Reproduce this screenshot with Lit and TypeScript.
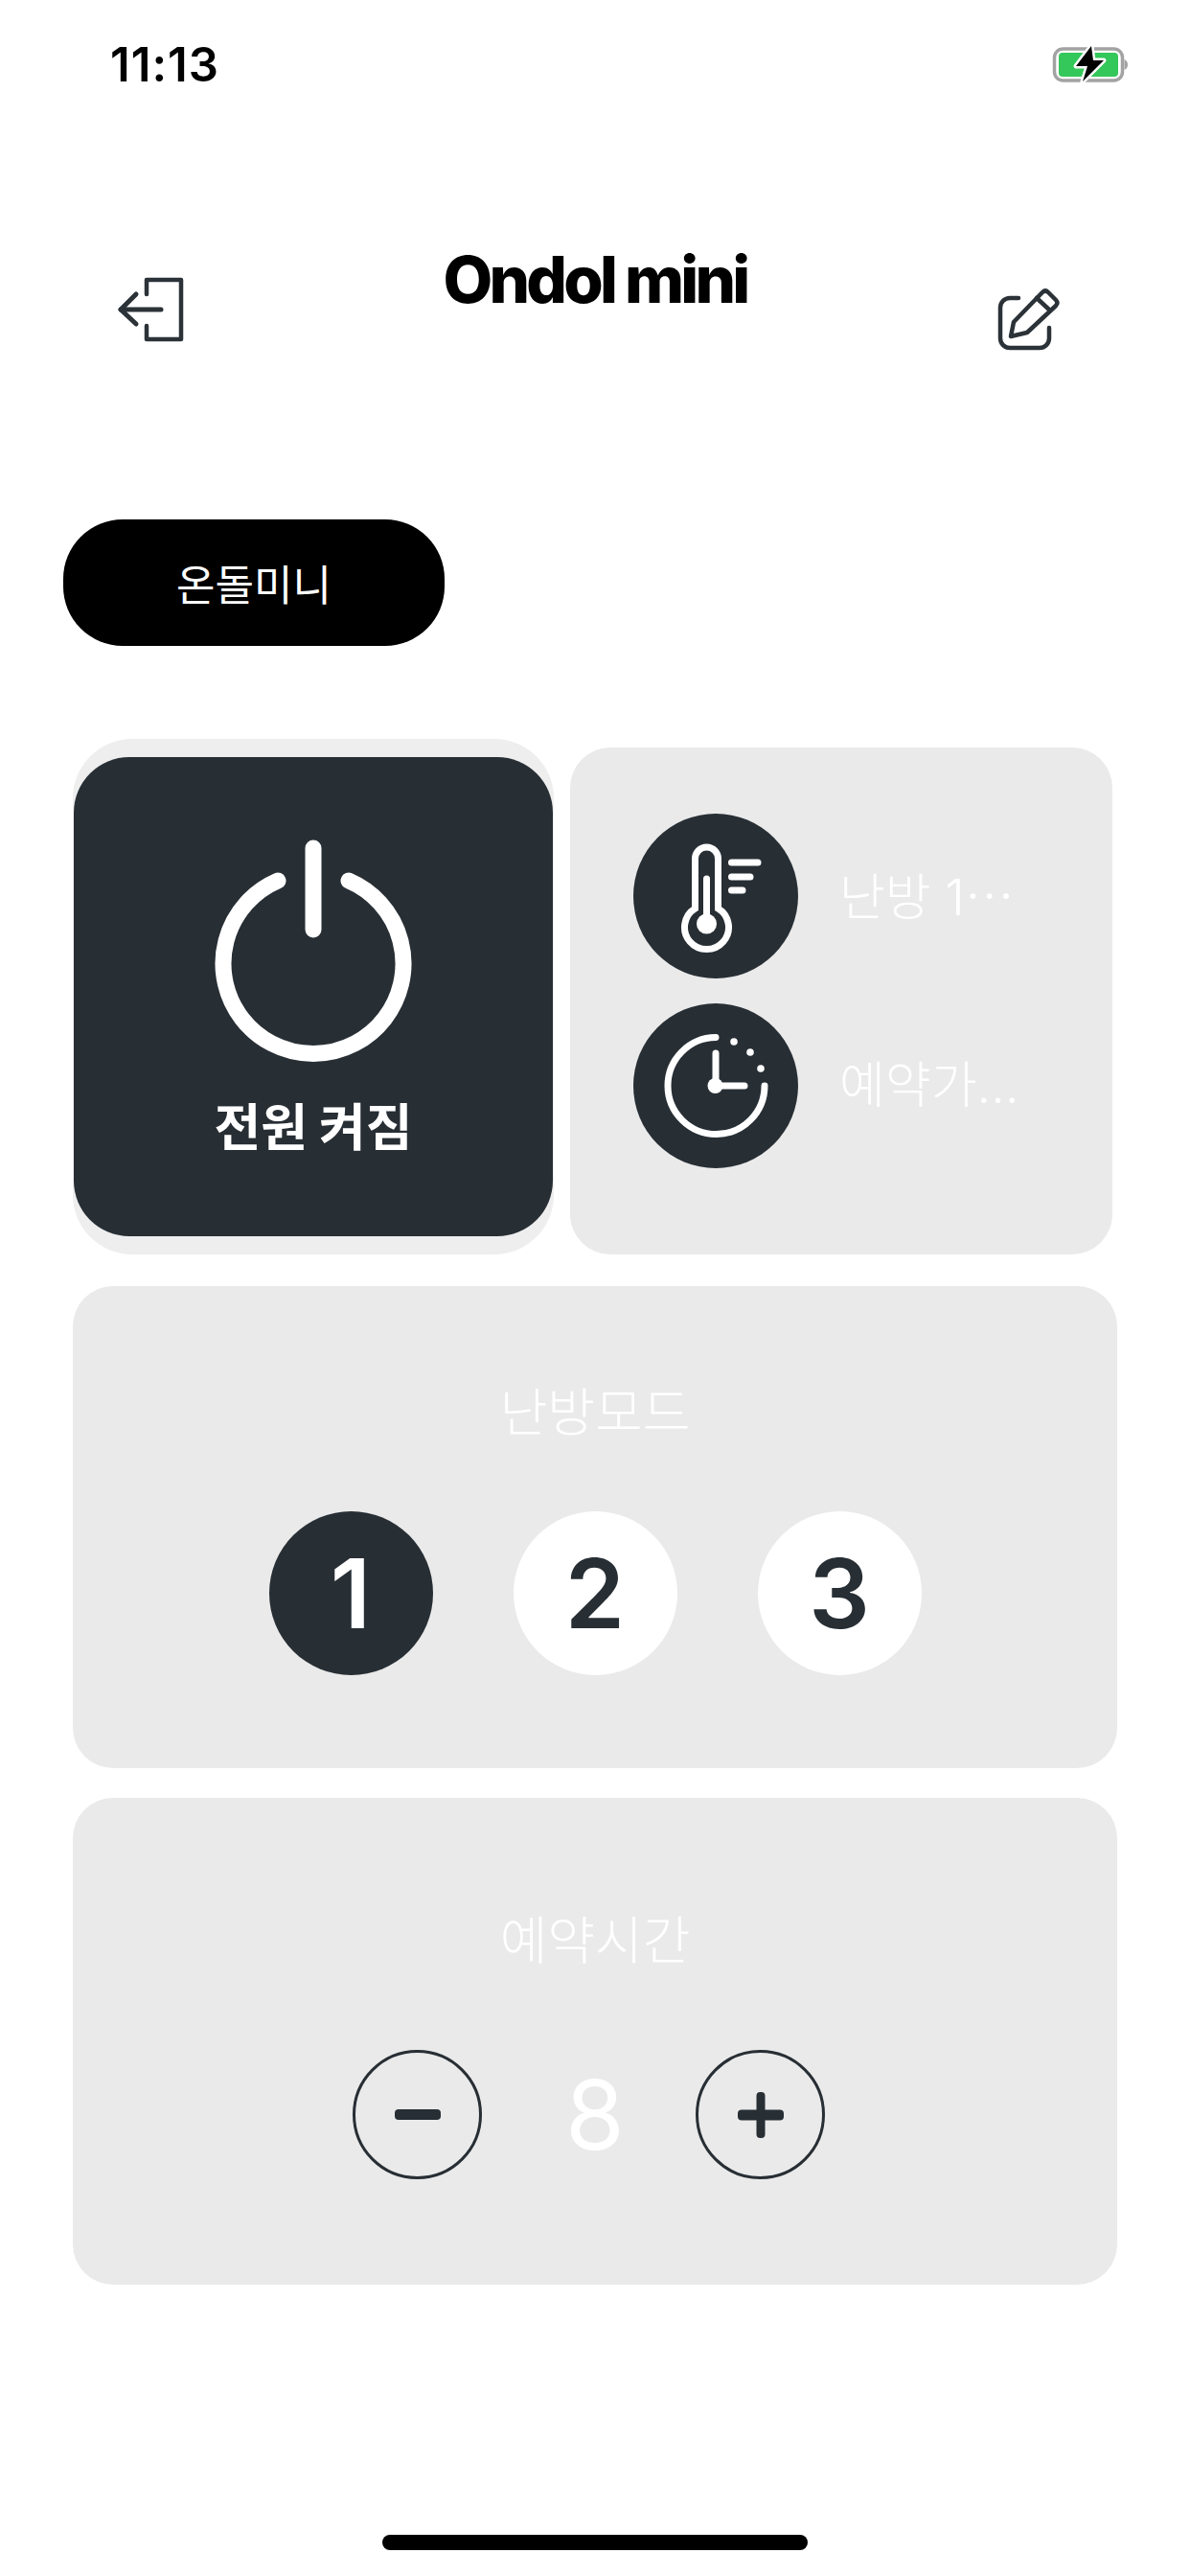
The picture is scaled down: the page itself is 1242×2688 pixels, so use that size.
import { LitElement, html, css } from "lit";
import { customElement } from "lit/decorators.js";

@customElement("app-root")
export class AppRoot extends LitElement {
  static styles = css`
    :host { display: block; width: 1242px; height: 2688px; background: #fff; position: relative; overflow: hidden; font-family: "Noto Sans CJK KR", "Noto Sans", sans-serif; }
    svg { display: block; overflow: visible; }
    .status { display: flex; justify-content: space-between; align-items: center; height: 134px; padding: 0 63px 0 115px; box-sizing: border-box; }
    .time { font: 600 49px/1 Inter, sans-serif; color: #000; letter-spacing: 1px; }
    .header { position: relative; display: flex; justify-content: space-between; align-items: flex-start; padding: 154px 134px 0 123px; box-sizing: border-box; height: 408px; }
    .logo { position: absolute; left: 0; right: 0; top: 118px; text-align: center; font: 800 67px/80px Inter, sans-serif; color: #000; letter-spacing: -3.8px; }
    .right { margin-top: 12px; }
    .pill { margin-left: 66px; width: 398px; height: 132px; border-radius: 62px; background: #000; color: #fff; display: flex; align-items: center; justify-content: center; font-size: 44px; }
    .top { display: flex; margin: 97px 0 0 76px; gap: 17px; align-items: flex-start; }
    .power-wrap { width: 502px; height: 538px; border-radius: 62px; background: #eee; display: flex; align-items: center; justify-content: center; }
    .power { width: 500px; height: 500px; border-radius: 58px; background: #272e34; color: #fff; display: flex; flex-direction: column; align-items: center; box-sizing: border-box; padding-top: 86px; }
    .power-label { font-size: 53px; font-weight: 700; line-height: 60px; margin-top: 37px; }
    .info { width: 566px; height: 529px; margin-top: 9px; background: #eaeaea; border-radius: 42px; display: flex; flex-direction: column; gap: 26px; padding: 69px 0 0 66px; box-sizing: border-box; }
    .info-row { display: flex; align-items: center; gap: 43px; color: #fff; font: 300 52px/60px Inter, "Noto Sans CJK KR", sans-serif; }
    .cjk { font-family: "Noto Sans CJK KR", sans-serif; }
    .dark { width: 172px; height: 172px; border-radius: 50%; background: #272e34; display: flex; align-items: center; justify-content: center; flex: none; }
    .card { width: 1090px; background: #eaeaea; border-radius: 42px; margin-left: 76px; display: flex; flex-direction: column; align-items: center; color: #fff; box-sizing: border-box; }
    .mode { height: 503px; margin-top: 33px; padding-top: 96px; }
    .sched { height: 508px; margin-top: 31px; padding-top: 113px; }
    .title { font-size: 54px; font-weight: 300; line-height: 66px; }
    .modes { display: flex; gap: 84px; margin-top: 73px; }
    .mode-btn { width: 171px; height: 171px; border-radius: 50%; background: #fff; color: #272e34; display: flex; align-items: center; justify-content: center; font: 600 100px/1 Inter, sans-serif; }
    .mode-btn.on { background: #272e34; color: #fff; }
    .stepper { display: flex; align-items: center; margin-top: 84px; padding-right: 13px; }
    .step { width: 135px; height: 135px; border-radius: 50%; border: 3.5px solid #272e34; box-sizing: border-box; display: flex; align-items: center; justify-content: center; }
    .value { width: 223px; padding-left: 13px; box-sizing: border-box; text-align: center; font: 400 100px/135px Inter, sans-serif; color: #fff; }
    .indicator { position: absolute; left: 399px; top: 2645px; width: 444px; height: 16px; border-radius: 8px; background: #000; }
  `;

  render() {
    return html`
      <div class="status">
        <span class="time">11:13</span>
        <svg width="80" height="42" viewBox="0 0 80 42">
          <rect x="1.500" y="5" width="71" height="33" rx="9" fill="none" stroke="#a3a3a3" stroke-width="3.500"/>
          <rect x="6" y="9" width="62" height="25" rx="4" fill="#34c759"/>
          <path d="M74.500 16c2.500 1 3.500 3 3.500 5.500s-1 4.500-3.500 5.500z" fill="#a3a3a3"/>
          <path d="M40 2 L24 23 H36 L31 39 L53 17 H42 Z" fill="#000" stroke="#fff" stroke-width="5" stroke-linejoin="round" paint-order="stroke"/>
        </svg>
      </div>
      <div class="header">
        <svg width="68" height="68" viewBox="0 0 68 68" fill="none" stroke="#2b3238" stroke-width="4.500" stroke-linecap="round" stroke-linejoin="round">
          <path d="M30 19 V4 H66 V66 H30 V52"/>
          <path d="M19 19 L3 35 L19 50" stroke-width="5"/>
          <path d="M3 35 H45" stroke-width="5"/>
        </svg>
        <div class="logo">Ondol mini</div>
        <svg class="right" width="68" height="68" viewBox="0 0 68 68" fill="none" stroke="#2b3238" stroke-width="4.500" stroke-linecap="round" stroke-linejoin="round">
          <path d="M23 11 H14 A10 10 0 0 0 4 21 V53 A10 10 0 0 0 14 63 H45 A10 10 0 0 0 55 53 V42"/>
          <path d="M15 51 L18 36 L48 5 Q51 2 54 5 L62 13 Q65 16 62 19 L32 47 Z"/>
          <path d="M42 11 L56 24"/>
        </svg>
      </div>
      <div class="pill">온돌미니</div>
      <div class="top">
        <div class="power-wrap">
          <div class="power">
            <svg width="206" height="230" viewBox="0 0 206 230" fill="none" stroke="#fff" stroke-width="17" stroke-linecap="round">
              <path d="M103 9 V94"/>
              <path d="M66 43 A94 94 0 1 0 140 43"/>
            </svg>
            <div class="power-label">전원 켜짐</div>
          </div>
        </div>
        <div class="info">
          <div class="info-row">
            <div class="dark">
              <svg width="172" height="172" viewBox="661 849 172 172" fill="none" stroke="#fff" stroke-width="7" stroke-linecap="round">
                <path d="M725.500 948 V896 A12 12 0 0 1 749.500 896 V948 A23 23 0 1 1 725.500 948 Z"/>
                <path d="M737.500 917 V960"/>
                <circle cx="737.500" cy="964" r="10.500" fill="#fff" stroke="none"/>
                <path d="M763.500 900 H791 M763.500 915 H783 M763.500 929 H775"/>
              </svg>
            </div>
            <span>난방 1<span class="cjk">…</span></span>
          </div>
          <div class="info-row">
            <div class="dark">
              <svg width="172" height="172" viewBox="661 1048 172 172" fill="none" stroke="#fff" stroke-width="7" stroke-linecap="round">
                <path d="M747 1083.500 A50.500 50.500 0 1 0 798 1134"/>
                <path d="M747 1100 V1134 H777"/>
                <circle cx="746.500" cy="1134" r="8" fill="#fff" stroke="none"/>
                <circle cx="766" cy="1088" r="3.800" fill="#fff" stroke="none"/>
                <circle cx="783" cy="1099" r="3.800" fill="#fff" stroke="none"/>
                <circle cx="794" cy="1116" r="3.800" fill="#fff" stroke="none"/>
              </svg>
            </div>
            <span>예약가…</span>
          </div>
        </div>
      </div>
      <div class="card mode">
        <div class="title">난방모드</div>
        <div class="modes">
          <div class="mode-btn on">1</div>
          <div class="mode-btn">2</div>
          <div class="mode-btn">3</div>
        </div>
      </div>
      <div class="card sched">
        <div class="title">예약시간</div>
        <div class="stepper">
          <div class="step">
            <svg width="48" height="11" viewBox="0 0 48 11"><rect width="48" height="11" rx="4" fill="#272e34"/></svg>
          </div>
          <div class="value">8</div>
          <div class="step">
            <svg width="48" height="48" viewBox="0 0 48 48" fill="#272e34"><rect y="18.500" width="48" height="11" rx="4"/><rect x="19.500" width="9" height="48" rx="4"/></svg>
          </div>
        </div>
      </div>
      <div class="indicator"></div>
    `;
  }
}
